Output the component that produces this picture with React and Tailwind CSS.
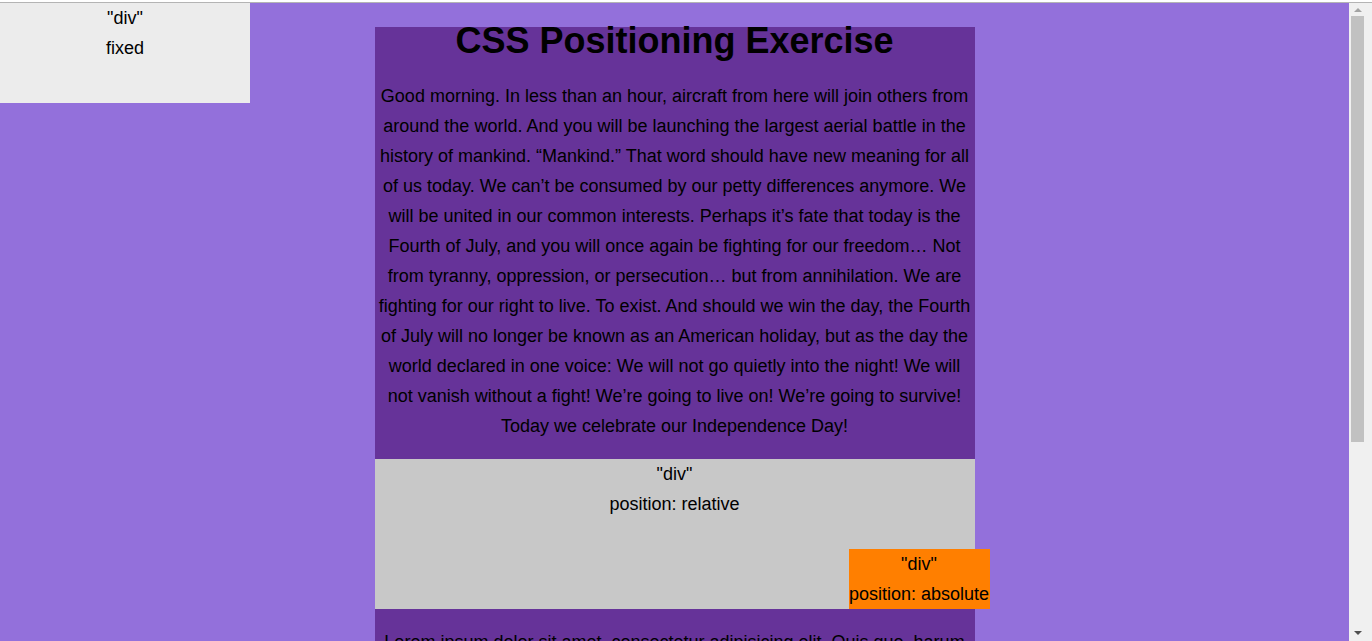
import React from "react";

// Lines of the speech, broken where the reference breaks them
const speech = [
  "Good morning. In less than an hour, aircraft from here will join others from",
  "around the world. And you will be launching the largest aerial battle in the",
  "history of mankind. “Mankind.” That word should have new meaning for all",
  "of us today. We can’t be consumed by our petty differences anymore. We",
  "will be united in our common interests. Perhaps it’s fate that today is the",
  "Fourth of July, and you will once again be fighting for our freedom… Not",
  "from tyranny, oppression, or persecution… but from annihilation. We are",
  "fighting for our right to live. To exist. And should we win the day, the Fourth",
  "of July will no longer be known as an American holiday, but as the day the",
  "world declared in one voice: We will not go quietly into the night! We will",
  "not vanish without a fight! We’re going to live on! We’re going to survive!",
  "Today we celebrate our Independence Day!",
];

function Scrollbar() {
  return (
    <div className="flex w-[23px] shrink-0 flex-col bg-[#f0f0f0]">
      <div className="flex h-[13px] w-[17px] items-center justify-center">
        <div className="h-0 w-0 border-x-[4px] border-b-[4px] border-x-transparent border-b-[#a3a3a3]" />
      </div>
      <div className="mx-[2px] h-[426px] w-[13px] bg-[#c1c1c1]" />
      <div className="flex-1" />
      <div className="flex h-[17px] w-[17px] items-center justify-center">
        <div className="h-0 w-0 border-x-[4px] border-t-[4px] border-x-transparent border-t-[#505050]" />
      </div>
    </div>
  );
}

export default function App() {
  return (
    <div className="flex h-[641px] w-full flex-col overflow-hidden bg-white font-['Liberation_Sans',Arial,sans-serif] text-black">
      <div className="h-[2px] w-full bg-white" />
      <div className="h-px w-full bg-[#b4b4b4]" />
      <div className="flex min-h-0 flex-1">
        <div className="relative flex-1 overflow-hidden bg-[#9370db]">
          {/* fixed box in the top-left corner */}
          <div className="absolute left-0 top-0 z-10 h-[100px] w-[250px] bg-[#ececec] text-center text-[18px] leading-[30px]">
            <div>"div"</div>
            <div>fixed</div>
          </div>

          <div className="mx-auto mt-[24px] w-[600px] bg-[#663399] text-center">
            <h1 className="text-[36px] font-bold leading-[28px]">CSS Positioning Exercise</h1>
            <p className="mt-[26px] whitespace-nowrap text-[18px] leading-[30px]">
              {speech.map((line, i) => (
                <React.Fragment key={i}>
                  {line}
                  {i < speech.length - 1 && <br />}
                </React.Fragment>
              ))}
            </p>

            {/* relative box with the absolute child */}
            <div className="relative mt-[18px] h-[150px] bg-[#c8c8c8] text-[18px] leading-[30px]">
              <div>"div"</div>
              <div>position: relative</div>
              <div className="absolute bottom-0 right-[-15px] h-[60px] w-[141px] bg-[#ff7f00] text-center">
                <div>"div"</div>
                <div className="whitespace-nowrap">position: absolute</div>
              </div>
            </div>

            <p className="px-[9px] pt-[18px] text-[18px] leading-[30px]">
              Lorem ipsum dolor sit amet, consectetur adipisicing elit. Quis quo, harum
              nobis voluptatum, dolores eum odio libero facere ab ipsa, doloribus.
            </p>
          </div>
        </div>
        <Scrollbar />
      </div>
    </div>
  );
}
